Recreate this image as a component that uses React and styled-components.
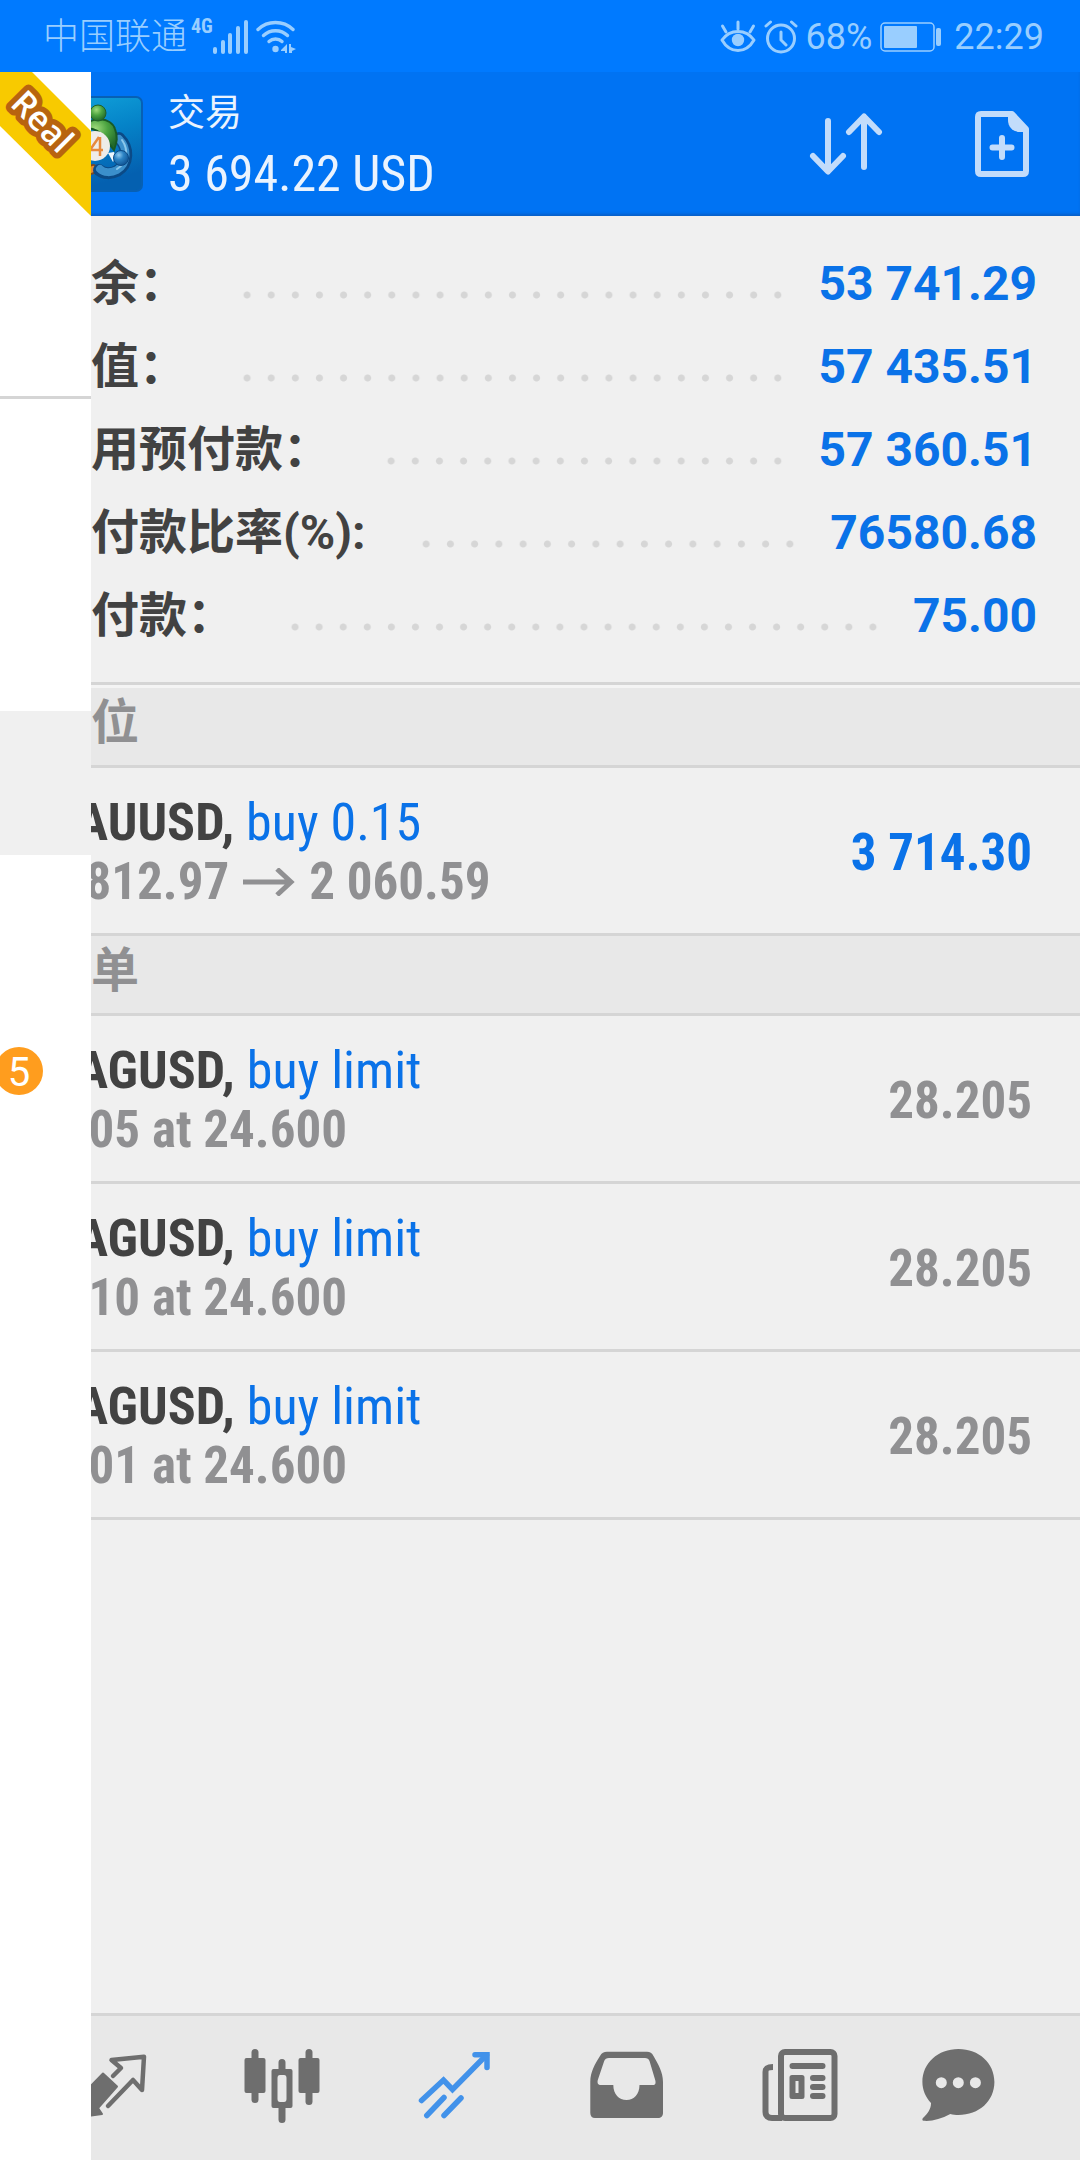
import React from 'react';
import styled, { createGlobalStyle } from 'styled-components';

const account = [
  { label: '结余：', value: '53 741.29' },
  { label: '净值：', value: '57 435.51' },
  { label: '可用预付款：', value: '57 360.51' },
  { label: '预付款比率(%):', value: '76580.68' },
  { label: '预付款：', value: '75.00' },
];

const positions = [
  { id: 1, symbol: 'XAUUSD,', action: 'buy 0.15', detail: '1 812.97', target: '2 060.59', value: '3 714.30' },
];

const orders = [
  { id: 2, symbol: 'XAGUSD,', action: 'buy limit', detail: '0.05 at 24.600', value: '28.205' },
  { id: 3, symbol: 'XAGUSD,', action: 'buy limit', detail: '0.10 at 24.600', value: '28.205' },
  { id: 4, symbol: 'XAGUSD,', action: 'buy limit', detail: '0.01 at 24.600', value: '28.205' },
];

/* ---------- status bar icons ---------- */

const SignalIcon = () => (
  <svg width="36" height="34" viewBox="0 0 36 34" fill="currentColor" aria-hidden="true">
    <rect x="0" y="27" width="4" height="7" rx="2" />
    <rect x="8" y="20" width="4" height="14" rx="2" />
    <rect x="15" y="13" width="4" height="21" rx="2" />
    <rect x="23" y="6" width="4" height="28" rx="2" />
    <rect x="31" y="0" width="4" height="34" rx="2" />
  </svg>
);

const WifiIcon = () => (
  <svg width="40" height="34" viewBox="0 0 40 34" fill="none" stroke="currentColor" strokeWidth="3.4" strokeLinecap="round" aria-hidden="true">
    <path d="M2 9.500A25.500 25.500 0 0 1 37 9.500" />
    <path d="M7.500 15.500A17.500 17.500 0 0 1 31.500 15.500" />
    <path d="M13 21.500A9.500 9.500 0 0 1 26 21.500" />
    <circle cx="19.500" cy="29" r="3.200" fill="currentColor" stroke="none" />
    <path d="M25 30L31 24V33H29V31H25ZM33 24H35V27L40 29L36 31V33H33Z" fill="currentColor" stroke="none" />
  </svg>
);

const EyeIcon = () => (
  <svg width="36" height="34" viewBox="0 0 36 34" fill="none" stroke="currentColor" strokeWidth="3" strokeLinecap="round" strokeLinejoin="round" aria-hidden="true">
    <path d="M2 20C10 8.500 26 8.500 34 20C26 34 10 34 2 20Z" />
    <path d="M18 2V9M2.500 6L6 12M33.500 6L30 12" />
    <circle cx="18" cy="20" r="6.200" fill="currentColor" stroke="none" />
  </svg>
);

const AlarmIcon = () => (
  <svg width="34" height="34" viewBox="0 0 34 34" fill="none" stroke="currentColor" strokeWidth="3" strokeLinecap="round" aria-hidden="true">
    <circle cx="17" cy="18.500" r="13.500" />
    <path d="M2 6L6.500 2M32 6L27.500 2M17 12V20L22 25" />
  </svg>
);

const BatteryIcon = () => (
  <svg width="62" height="30" viewBox="0 0 62 30" fill="none" aria-hidden="true">
    <rect x="1" y="1" width="53" height="28" rx="4" stroke="currentColor" strokeWidth="1.500" />
    <rect x="4" y="4" width="33" height="22" rx="1" fill="currentColor" />
    <rect x="56" y="6" width="5" height="18" rx="2" fill="currentColor" />
  </svg>
);

/* ---------- header icons ---------- */

const AppLogo = () => (
  <svg width="96" height="96" viewBox="0 0 96 96" aria-hidden="true">
    <defs>
      <linearGradient id="tile" x1="0" y1="0" x2="0.300" y2="1">
        <stop offset="0" stopColor="#12a5dc" />
        <stop offset="0.500" stopColor="#0583c8" />
        <stop offset="1" stopColor="#0460b0" />
      </linearGradient>
      <radialGradient id="green" cx="0.400" cy="0.300" r="0.700">
        <stop offset="0" stopColor="#9fdb7c" />
        <stop offset="0.500" stopColor="#4ba340" />
        <stop offset="1" stopColor="#226a2b" />
      </radialGradient>
      <radialGradient id="blue" cx="0.350" cy="0.300" r="0.800">
        <stop offset="0" stopColor="#8fcaf0" />
        <stop offset="0.400" stopColor="#2c83c4" />
        <stop offset="1" stopColor="#0b4c8c" />
      </radialGradient>
    </defs>
    <rect x="1" y="1" width="94" height="94" rx="6" fill="url(#tile)" stroke="#0760b4" strokeWidth="2" />
    <path d="M20 60C24 72 36 78 46 73" fill="none" stroke="#7d4a22" strokeWidth="10" strokeLinecap="round" />
    <path d="M20 60C24 72 36 78 46 73" fill="none" stroke="#e08b33" strokeWidth="6" strokeLinecap="round" />
    <path d="M72 42C82 52 82 68 70 75C64 78 57 78 52 74" fill="none" stroke="#0b4a86" strokeWidth="12" strokeLinecap="round" />
    <path d="M72 43C81 52 81 67 70 74C64 77 57 77 53 73" fill="none" stroke="#3b8fcb" strokeWidth="8" strokeLinecap="round" />
    <path d="M75 44C82 54 80 67 70 73" fill="none" stroke="#8cc8ec" strokeWidth="2" strokeLinecap="round" />
    <path d="M34 33C44 19 64 21 68 33C71 41 70 46 67 54L58 43C52 33 43 31 34 33Z" fill="url(#green)" stroke="#185a25" strokeWidth="2" />
    <circle cx="51" cy="17" r="8" fill="url(#green)" stroke="#215f29" strokeWidth="1" />
    <path d="M61 57L67 56L69 61L66 66Z" fill="#eef7fd" />
    <circle cx="74" cy="62" r="7.500" fill="url(#blue)" stroke="#0b4a86" strokeWidth="1" />
    <circle cx="48" cy="50" r="15" fill="#eeece8" />
    <path d="M52 41L43 54H56M53 41V60" fill="none" stroke="#e68a3e" strokeWidth="2.500" />
  </svg>
);

const SortIcon = () => (
  <svg width="74" height="66" viewBox="0 0 74 66" fill="none" stroke="currentColor" strokeWidth="6" strokeLinecap="round" strokeLinejoin="round" aria-hidden="true">
    <path d="M19 10V60M4 45L19 60.500L34 45" />
    <path d="M55 56V6M40 21L55 5.500L70 21" />
  </svg>
);

const NewOrderIcon = () => (
  <svg width="56" height="68" viewBox="0 0 56 68" fill="none" aria-hidden="true">
    <path d="M7 4H38L52 19V61C52 63 51 64 49 64H7C5 64 4 63 4 61V7C4 5 5 4 7 4Z" stroke="currentColor" strokeWidth="6" strokeLinejoin="round" />
    <path d="M34 3H39L54 18V22H46C39 22 34 17 34 10Z" fill="currentColor" />
    <path d="M28 28V47M18.500 37.500H37.500" stroke="currentColor" strokeWidth="6" strokeLinecap="round" />
  </svg>
);

/* ---------- bottom tab icons ---------- */

const QuotesIcon = () => (
  <svg width="104" height="104" viewBox="0 0 104 104" aria-hidden="true">
    <path d="M56 40L64 32L54.500 24L87 20.700L85 54L76 44L51 70" fill="none" stroke="currentColor" strokeWidth="4.500" strokeLinecap="round" strokeLinejoin="round" />
    <path d="M46 37.500L60 50.500L41 72L45 78L16 82L19 50L27 57Z" fill="currentColor" stroke="currentColor" strokeWidth="2" strokeLinejoin="round" />
  </svg>
);

const ChartIcon = () => (
  <svg width="104" height="104" viewBox="0 0 104 104" fill="currentColor" aria-hidden="true">
    <rect x="14.500" y="22" width="21" height="35" rx="2" />
    <rect x="21.500" y="13" width="7" height="54" rx="3.500" />
    <rect x="68.500" y="22" width="21" height="35" rx="2" />
    <rect x="75.500" y="13" width="7" height="56" rx="3.500" />
    <path d="M48.500 37V26.500A3.500 3.500 0 0 1 55.500 26.500V37ZM48.500 70H55.500V83.500A3.500 3.500 0 0 1 48.500 83.500Z" />
    <path fillRule="evenodd" d="M43.500 33H60.500A2 2 0 0 1 62.500 35V70A2 2 0 0 1 60.500 72H43.500A2 2 0 0 1 41.500 70V35A2 2 0 0 1 43.500 33ZM50 39Q47.500 39 47.500 42V63Q47.500 66 50 66H54Q56.500 66 56.500 63V42Q56.500 39 54 39Z" />
  </svg>
);

const TradeIcon = () => (
  <svg width="104" height="104" viewBox="0 0 104 104" fill="none" stroke="currentColor" strokeWidth="5.500" strokeLinecap="round" aria-hidden="true">
    <path d="M18.500 64.500L40.500 44L49.500 53.500L83.500 19" />
    <path d="M72 18.700H84V31.500" />
    <path d="M41 61.500L23.800 79.500M58 62L41 79.500" />
  </svg>
);

const HistoryIcon = () => (
  <svg width="104" height="104" viewBox="0 0 104 104" fill="currentColor" aria-hidden="true">
    <path fillRule="evenodd" d="M32 15.700H72C75 15.700 77 17 78.500 20C83 28 88 36 88 46V77C88 80 86 82 83 82H20C17 82 15.300 80 15.300 77V46C15.300 36 20 28 25 20C26.500 17 29 15.700 32 15.700ZM34 22C31.500 22 30 23 29.200 25L22.800 44C22 47 23 49 26 49H38.300C38.300 58 44 64 51.500 64C59 64 64.500 58 64.500 49H78C80.500 49 81 47 80.200 44L74.500 25C74 23 72 22 70 22Z" />
  </svg>
);

const NewsIcon = () => (
  <svg width="104" height="104" viewBox="0 0 104 104" aria-hidden="true">
    <rect x="33" y="16" width="53.500" height="66" rx="4" fill="none" stroke="currentColor" strokeWidth="6" />
    <path d="M25 31C20 31 17.500 32 17.500 36V76C17.500 80 20 82 24 82H34" fill="none" stroke="currentColor" strokeWidth="6" />
    <g fill="currentColor">
      <rect x="41.500" y="27" width="36" height="6" rx="3" />
      <path fillRule="evenodd" d="M44 39H54Q56.500 39 56.500 41.500V60.500Q56.500 63 54 63H44Q41.500 63 41.500 60.500V41.500Q41.500 39 44 39ZM47.500 45V57H50.500V45Z" />
      <rect x="62" y="39" width="15.500" height="6" rx="3" />
      <rect x="62" y="48" width="15.500" height="6" rx="3" />
      <rect x="62" y="57" width="15.500" height="6" rx="3" />
    </g>
  </svg>
);

const ChatIcon = () => (
  <svg width="104" height="104" viewBox="0 0 104 104" fill="currentColor" aria-hidden="true">
    <path fillRule="evenodd" d="M37.400 13C58 13 73.400 27 73.400 46C73.400 65 58 79 37.400 79C34.500 79 32 78.700 29.300 78C20 83 11 85.500 2.500 84.800C1.200 84.500 1 83 2 82C7 77 10 73 10 67C4.500 61 1.400 54 1.400 46C1.400 27 17 13 37.400 13ZM20.300 41.200A5.500 5.500 0 1 0 20.300 52.200A5.500 5.500 0 1 0 20.300 41.200ZM37.300 41.200A5.500 5.500 0 1 0 37.300 52.200A5.500 5.500 0 1 0 37.300 41.200ZM54.400 41.200A5.500 5.500 0 1 0 54.400 52.200A5.500 5.500 0 1 0 54.400 41.200Z" />
  </svg>
);

const tabs = [
  { name: 'quotes', Icon: QuotesIcon },
  { name: 'chart', Icon: ChartIcon },
  { name: 'trade', Icon: TradeIcon },
  { name: 'history', Icon: HistoryIcon },
  { name: 'news', Icon: NewsIcon },
  { name: 'chat', Icon: ChatIcon },
];

const TradeRow = ({ item, profit }) => (
  <Row>
    <div>
      <RowTitle>
        <b>{item.symbol}</b> {item.action}
      </RowTitle>
      <RowDetail>
        <span>{item.detail}</span>
        {item.target && (
          <>
            <svg width="52" height="28" viewBox="0 0 52 28" fill="none" stroke="currentColor" strokeWidth="5" aria-hidden="true">
              <path d="M0 14H48M34 1L48 14L34 27" />
            </svg>
            <span>{item.target}</span>
          </>
        )}
      </RowDetail>
    </div>
    <RowValue $profit={profit}>{item.value}</RowValue>
  </Row>
);

export default function App() {
  return (
    <Screen>
      <GlobalStyle />
      <StatusBar>
        <Carrier>
          <span>中国联通</span>
          <Network>4G</Network>
          <SignalIcon />
          <WifiIcon />
        </Carrier>
        <Indicators>
          <EyeIcon />
          <AlarmIcon />
          <span>68%</span>
          <BatteryIcon />
          <Clock>22:29</Clock>
        </Indicators>
      </StatusBar>

      <Body>
        <Header>
          <AppLogo />
          <Heading>
            <h1>交易</h1>
            <p>3 694.22 USD</p>
          </Heading>
          <IconButton type="button" aria-label="sort"><SortIcon /></IconButton>
          <IconButton type="button" aria-label="new order"><NewOrderIcon /></IconButton>
        </Header>

        <main>
          <Account>
            {account.map(({ label, value }) => (
              <AccountRow key={label}>
                <dt>{label}</dt>
                <Dots />
                <dd>{value}</dd>
              </AccountRow>
            ))}
          </Account>
          <SectionTitle $first>价位</SectionTitle>
          {positions.map(item => <TradeRow key={item.id} item={item} profit />)}
          <SectionTitle>订单</SectionTitle>
          {orders.map(item => <TradeRow key={item.id} item={item} />)}
        </main>

        <TabBar>
          {tabs.map(({ name, Icon }) => (
            <Tab key={name} type="button" aria-label={name} $active={name === 'trade'}>
              <Icon />
            </Tab>
          ))}
        </TabBar>

        {/* edge of the side menu, slid over the page */}
        <Drawer>
          <DrawerAccount>
            <svg width="91" height="144" viewBox="0 0 91 144" aria-hidden="true">
              <path d="M0 0H32L91 59V144L0 54Z" fill="#f8ca00" />
              <text x="9" y="33" transform="rotate(45 9 33)">Real</text>
            </svg>
          </DrawerAccount>
          <DrawerItem />
          <DrawerItem />
          <DrawerItem $selected />
          <DrawerItem />
          <DrawerItem>
            <Badge>5</Badge>
          </DrawerItem>
        </Drawer>
      </Body>
    </Screen>
  );
}

const GlobalStyle = createGlobalStyle`
  * {
    box-sizing: border-box;
  }

  body {
    margin: 0;
    background: #f0f0f0;
    font-family: Roboto, "Noto Sans CJK SC", sans-serif;
  }

  svg {
    display: block;
    flex: none;
  }
`

const Screen = styled.div`
  display: flex;
  flex-direction: column;
  min-height: 100vh;
`

const StatusBar = styled.div`
  display: flex;
  justify-content: space-between;
  height: 72px;
  padding: 2px 36px 0 43px;
  background: #007aff;
  color: #99ceff;
  font-size: 36px;
  font-weight: 400;
  line-height: 70px;
`

const Carrier = styled.div`
  display: flex;
  align-items: center;
  font-weight: 300;

  svg + svg {
    margin-left: 7px;
  }
`

const Network = styled.span`
  align-self: flex-start;
  margin: 14px 0 0 4px;
  font: 700 20px/20px "Roboto Condensed", sans-serif;
`

const Indicators = styled.div`
  display: flex;
  align-items: center;
  gap: 8px;
`

const Clock = styled.span`
  margin-left: 4px;
`

const Body = styled.div`
  position: relative;
  flex: 1;
  display: flex;
  flex-direction: column;

  main {
    flex: 1;
  }
`

const Header = styled.header`
  display: flex;
  align-items: center;
  height: 144px;
  padding: 0 36px 0 47px;
  background: #0073f3;
  box-shadow: inset 0 -3px 3px -1px #0a5fc6;
  color: #c2dcfb;
`

const Heading = styled.div`
  flex: 1;
  margin-left: 25px;
  color: #eaf3fe;

  h1 {
    margin: 0;
    font-size: 37px;
    font-weight: 400;
    line-height: 60px;
  }

  p {
    margin: 0;
    font: 400 50px/60px "Roboto Condensed", sans-serif;
  }
`

const IconButton = styled.button`
  width: 84px;
  height: 84px;
  padding: 0;
  border: 0;
  background: none;
  color: inherit;
  display: flex;
  align-items: center;
  justify-content: center;

  & + & {
    margin-left: 72px;
  }
`

const Account = styled.dl`
  margin: 0;
  padding: 26px 43px 25px;
`

const AccountRow = styled.div`
  display: flex;
  height: 83px;
  color: #424242;
  font-size: 48px;
  font-weight: 700;
  line-height: 83px;

  dt {
    white-space: nowrap;
  }

  dd {
    margin: 0;
    color: #0a72e8;
  }
`

const Dots = styled.span`
  flex: 1;
  height: 8px;
  margin: 49px 28px 0 48px;
  background: radial-gradient(circle, #d6d6d6 3px, transparent 4px) 0 0 / 24px 8px round;
`

const SectionTitle = styled.h2`
  height: ${p => (p.$first ? '86px' : '80px')};
  margin: 0;
  padding: ${p => (p.$first ? '3px 43px 0' : '0 43px')};
  border-bottom: 3px solid #d5d5d5;
  border-top: ${p => (p.$first ? '3px solid #d5d5d5' : '0')};
  box-shadow: ${p => (p.$first ? 'inset 0 3px #f4f4f4' : 'none')};
  background: #e8e8e8;
  color: #909092;
  font-size: 48px;
  font-weight: 700;
  line-height: 70px;
`

const Row = styled.div`
  display: flex;
  align-items: center;
  justify-content: space-between;
  height: 168px;
  padding: 3px 48px 0;
  border-bottom: 3px solid #d5d5d5;
  font: 700 51px/59px "Roboto Condensed", sans-serif;
`

const RowTitle = styled.div`
  color: #0a72e8;
  font-size: 52px;
  font-weight: 400;

  b {
    color: #424242;
  }
`

const RowDetail = styled.div`
  display: flex;
  align-items: center;
  gap: 14px;
  color: #909092;
`

const RowValue = styled.span`
  color: ${p => (p.$profit ? '#0a72e8' : '#909092')};
`

const TabBar = styled.nav`
  display: flex;
  height: 147px;
  padding: 0 21px 0 23px;
  border-top: 3px solid #d5d5d5;
  background: #e8e8e8;
`

const Tab = styled.button`
  flex: 1;
  padding: 0;
  border: 0;
  background: none;
  color: ${p => (p.$active ? '#4292ea' : '#6e6e6e')};
  display: flex;
  align-items: center;
  justify-content: center;
`

const Drawer = styled.aside`
  position: absolute;
  top: 0;
  bottom: 0;
  left: 0;
  width: 91px;
  overflow: hidden;
  background: #fff;
`

const DrawerAccount = styled.div`
  height: 327px;
  margin-bottom: 24px;
  border-bottom: 3px solid #d5d5d5;

  text {
    fill: #fff;
    stroke: #b8640f;
    stroke-width: 11px;
    stroke-linejoin: round;
    paint-order: stroke;
    font: 600 34px "Open Sans", sans-serif;
  }
`

const DrawerItem = styled.div`
  display: flex;
  align-items: center;
  justify-content: flex-end;
  height: 144px;
  padding-right: 48px;
  background: ${p => (p.$selected ? '#f0f0f0' : 'transparent')};
`

const Badge = styled.span`
  flex: none;
  width: 48px;
  height: 48px;
  border-radius: 50%;
  background: #ff9d1e;
  color: #fff;
  font-size: 40px;
  line-height: 52px;
  text-align: center;
`
